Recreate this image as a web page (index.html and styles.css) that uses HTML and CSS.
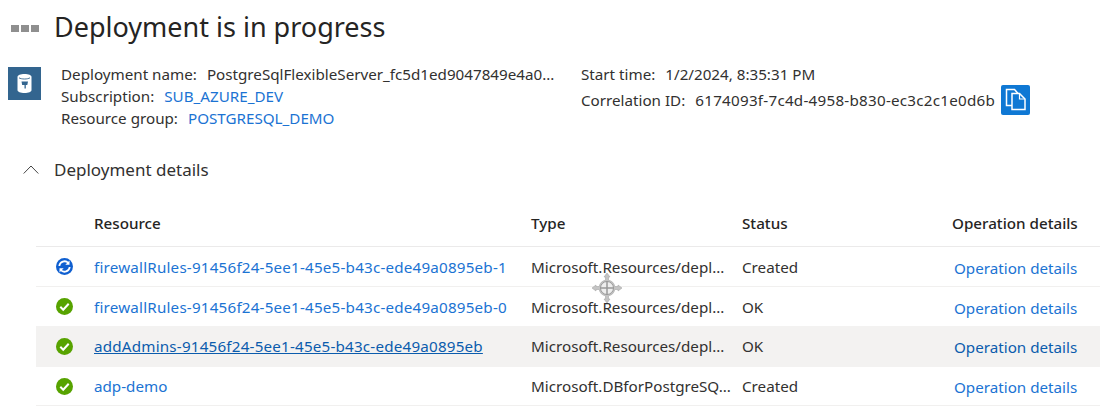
FILE: index.html
```html
<!DOCTYPE html>
<html lang="en">
<head>
<meta charset="utf-8">
<title>Deployment is in progress</title>
<link rel="stylesheet" href="styles.css">
</head>
<body>
<header class="title-row">
  <span class="dots"><i></i><i></i><i></i></span>
  <h1>Deployment is in progress</h1>
</header>
<section class="summary">
  <div class="res-icon">
    <svg width="33" height="33" viewBox="0 0 33 33"><path d="M9.500 10c0-2 3-3 7-3s7 1 7 3v13c0 2-3 3-7 3s-7-1-7-3z" fill="#fff"/><path d="M11 10.800c1.200.8 3.200 1.200 5.500 1.200s4.300-.4 5.500-1.200" fill="none" stroke="#33658f" stroke-width=".9"/><path d="M13.500 14.500h6.500l-.7 3.500h-1.500v3.500h-1.300V18h-2.300z" fill="#33658f"/></svg>
  </div>
  <div class="meta meta-left">
    <div>Deployment name:<span class="val">PostgreSqlFlexibleServer_fc5d1ed9047849e4a0...</span></div>
    <div>Subscription:<a class="val link">SUB_AZURE_DEV</a></div>
    <div>Resource group:<a class="val link">POSTGRESQL_DEMO</a></div>
  </div>
  <div class="meta meta-right">
    <div>Start time:<span class="val">1/2/2024, 8:35:31 PM</span></div>
    <div class="corr">Correlation ID:<span class="val hex">6174093f-7c4d-4958-b830-ec3c2c1e0d6b</span>
      <button class="copy" aria-label="Copy">
        <svg width="24" height="24" viewBox="0 0 24 24"><path d="M8 5.500h7.500l5.500 5.500v10.500H8z" fill="none" stroke="#fff" stroke-width="1.500"/><path d="M8 17.500H2.500V1.500h8l3.500 4" fill="none" stroke="#fff" stroke-width="1.500"/><path d="M15.500 5.500V11H21" fill="none" stroke="#fff" stroke-width="1.200"/></svg>
      </button>
    </div>
  </div>
</section>
<section class="details-head">
  <svg class="chev" width="16" height="9" viewBox="0 0 16 9"><path d="M.7 8.500 8 1l7.300 7.500" fill="none" stroke="#444" stroke-width="1"/></svg>
  <h2>Deployment details</h2>
</section>
<section class="table">
  <div class="row head">
    <span></span><span>Resource</span><span>Type</span><span>Status</span><span>Operation details</span>
  </div>
  <div class="row">
    <span class="ico"><svg width="17" height="17" viewBox="0 0 17 17"><circle cx="8.500" cy="8.500" r="8.500" fill="#0f5fd0"/><path d="M3.300 8a5.200 5.200 0 0 1 9-3M13.700 9a5.200 5.200 0 0 1-9 3" fill="none" stroke="#fff" stroke-width="1.800"/><path d="M13.500 2.500v4.200H9.300zM3.500 14.500v-4.200h4.200z" fill="#fff"/></svg></span>
    <a class="link id">firewallRules-91456f24-5ee1-45e5-b43c-ede49a0895eb-1</a>
    <span>Microsoft.Resources/depl...</span><span>Created</span><a class="link op">Operation details</a>
  </div>
  <div class="row">
    <span class="ico"><svg width="17" height="17" viewBox="0 0 17 17"><circle cx="8.500" cy="8.500" r="8.500" fill="#57a300"/><path d="M4.300 8.800l2.900 2.900 5.500-6" fill="none" stroke="#fff" stroke-width="2"/></svg></span>
    <a class="link id">firewallRules-91456f24-5ee1-45e5-b43c-ede49a0895eb-0</a>
    <span>Microsoft.Resources/depl...</span><span>OK</span><a class="link op">Operation details</a>
  </div>
  <div class="row hover">
    <span class="ico"><svg width="17" height="17" viewBox="0 0 17 17"><circle cx="8.500" cy="8.500" r="8.500" fill="#57a300"/><path d="M4.300 8.800l2.900 2.900 5.500-6" fill="none" stroke="#fff" stroke-width="2"/></svg></span>
    <a class="link id under">addAdmins-91456f24-5ee1-45e5-b43c-ede49a0895eb</a>
    <span>Microsoft.Resources/depl...</span><span>OK</span><a class="link op dark">Operation details</a>
  </div>
  <div class="row last">
    <span class="ico"><svg width="17" height="17" viewBox="0 0 17 17"><circle cx="8.500" cy="8.500" r="8.500" fill="#57a300"/><path d="M4.300 8.800l2.900 2.900 5.500-6" fill="none" stroke="#fff" stroke-width="2"/></svg></span>
    <a class="link">adp-demo</a>
    <span>Microsoft.DBforPostgreSQ...</span><span>Created</span><a class="link op">Operation details</a>
  </div>
</section>
<svg class="cursor" width="32" height="32" viewBox="0 0 32 32">
  <path d="M16 1l3 4h-1.500v3.200a8 8 0 0 1 6.300 6.300H27v-1.500l4 3-4 3v-1.500h-3.200a8 8 0 0 1-6.300 6.300V27H19l-3 4-3-4h1.500v-3.200a8 8 0 0 1-6.300-6.300H5V19l-4-3 4-3v1.500h3.200a8 8 0 0 1 6.300-6.300V5H13z" fill="#c4c4c4" stroke="#a8a8a8" stroke-width=".6"/>
  <circle cx="16" cy="16" r="6.500" fill="#eee" stroke="#999"/>
  <path d="M16 9.500v13M9.500 16h13" stroke="#999" stroke-width="1.500"/>
</svg>
</body>
</html>
```
FILE: styles.css
```css
* { box-sizing: border-box; }
html, body { margin: 0; padding: 0; }
body {
  width: 1100px; height: 418px; overflow: hidden; background: #fff; position: relative;
  font-family: "Noto Sans", "Open Sans", sans-serif; font-size: 15.200px; color: #323130;
}
a { text-decoration: none; }
.link { color: #1b73d3; }
h1, h2 { margin: 0; font-weight: 400; }
.title-row { display: flex; align-items: center; height: 54px; padding-left: 11px; }
.dots { display: flex; gap: 2px; width: 43px; margin-top: 3px; }
.dots i { width: 8px; height: 7px; background: #8f8f8f; }
h1 { font-size: 27px; line-height: 54px; color: #252423; }
.summary { display: flex; height: 84px; padding-top: 13px; }
.res-icon { width: 33px; height: 33px; margin-left: 8px; background: #33658f; }
.meta { line-height: 22px; margin-top: -4px; }
.meta-left { width: 520px; margin-left: 20px; }
.val { margin-left: 10px; }
.hex { letter-spacing: .25px; }
.id { letter-spacing: .2px; }
.corr { display: flex; align-items: center; height: 30px; }
.copy { width: 29px; height: 30px; margin-left: 6px; padding: 0; border: 0; border-radius: 2px; background: #0f78d4; display: flex; align-items: center; justify-content: center; }
.details-head { display: flex; align-items: center; height: 62px; padding-left: 23px; }
.chev { margin-right: 15px; }
h2 { font-size: 17px; }
.table { margin-left: 36px; }
.row {
  display: grid; grid-template-columns: 58px 437px 211px 210px 1fr;
  align-items: center; height: 40px; border-bottom: 1.500px solid #f1f0ef;
}
.row.head { font-weight: 500; height: 47px; border-bottom: 1.500px solid #ebeaea; color: #252423; }
.row.hover { background: #f3f2f1; border-bottom-color: #f3f2f1; height: 41px; margin-top: -1px; }
.row.last { height: 39px; }
.ico { display: flex; padding-left: 20px; }
.under { color: #0b5cad; text-decoration: underline; }
.op { padding-left: 2px; padding-top: 2px; }
.dark { color: #0b5cad; }
.cursor { position: absolute; left: 591px; top: 272px; }
```
